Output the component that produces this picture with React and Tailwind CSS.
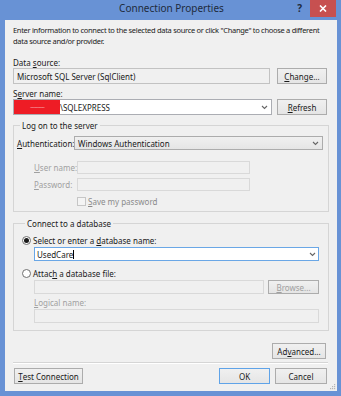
import React from 'react';

const Chevron = () => (
  <svg width="7" height="5" viewBox="0 0 7 5" className="shrink-0">
    <path d="M1 1 L3.5 3.5 L6 1" fill="none" stroke="#666" strokeWidth="1.1" />
  </svg>
);

const Btn = ({ children, className = '', disabled = false, primary = false }) => (
  <div
    className={
      'h-[16px] flex items-center justify-center border bg-gradient-to-b from-[#f0f0f0] to-[#e5e5e5] ' +
      (primary ? 'border-[#5fa3e8] ' : 'border-[#acacac] ') +
      (disabled ? 'text-[#a0a0a0] ' : 'text-[#1a1a1a] ') +
      className
    }
  >
    {children}
  </div>
);

const U = ({ children }) => <span className="underline underline-offset-[1px]">{children}</span>;

export default function App() {
  return (
    <div className="w-[341px] h-[396px] bg-[#6892d5] flex flex-col font-['Noto_Sans',sans-serif] text-[8px] leading-[11px] text-[#1a1a1a]">
      {/* title bar */}
      <div className="h-[20px] flex items-start relative shrink-0">
        <div className="flex-1 text-center text-[10px] leading-[17px] text-[#1e2b3c] pl-[2px]">Connection Properties</div>
        <div className="absolute right-[5px] top-0 flex items-start">
          <span className="text-[10px] leading-[17px] font-bold text-[#1e2b3c] mr-[8px]">?</span>
          <div className="w-[26px] h-[17px] bg-[#c75050] flex items-center justify-center">
            <svg width="8" height="7" viewBox="0 0 8 7">
              <path d="M1 0.5 L7 6.5 M7 0.5 L1 6.5" stroke="#fff" strokeWidth="1.6" />
            </svg>
          </div>
        </div>
      </div>

      {/* client area */}
      <div className="flex-1 ml-[5px] mr-[4px] mb-[5px] bg-[#f0f0f0] pl-[8px] pr-[10px] pt-[5px] flex flex-col relative">
        <p className="text-[7.5px] tracking-[-0.3px] whitespace-nowrap">
          Enter information to connect to the selected data source or click "Change" to choose a different
          <br />
          data source and/or provider.
        </p>

        <div className="mt-[10px]">Data <U>s</U>ource:</div>
        <div className="flex gap-[7px]">
          <div className="w-[257px] h-[16px] border border-[#c2c2c2] bg-[#f0f0f0] px-[3px] flex items-center">
            Microsoft SQL Server (SqlClient)
          </div>
          <Btn className="w-[50px]"><U>C</U>hange...</Btn>
        </div>

        <div className="mt-[4px]">S<U>e</U>rver name:</div>
        <div className="flex gap-[5px]">
          <div className="w-[259px] h-[16px] border border-[#abadb3] bg-white flex items-center pr-[3px]">
            <div className="w-[46px] h-full bg-[#ee1c25] flex items-center justify-center text-[#f7a8ab] text-[6px] tracking-[-1px]">
              ---------------
            </div>
            <span className="flex-1">\SQLEXPRESS</span>
            <Chevron />
          </div>
          <Btn className="w-[50px]"><U>R</U>efresh</Btn>
        </div>

        <fieldset className="mt-[5px] border border-[#d5d5d5] pl-[3px] pr-[4px] pb-[5px] w-[316px]">
          <legend className="ml-[3px] px-[2px]">Log on to the server</legend>
          <div className="mt-[5px] flex items-center h-[14px]">
            <span className="w-[57px] whitespace-nowrap"><U>A</U>uthentication:</span>
            <div className="w-[249px] h-[14px] border border-[#acacac] bg-gradient-to-b from-[#f0f0f0] to-[#e5e5e5] flex items-center px-[3px]">
              <span className="flex-1">Windows Authentication</span>
              <Chevron />
            </div>
          </div>
          <div className="mt-[11px] flex items-center h-[13px] text-[#a0a0a0]">
            <span className="w-[60px] pl-[17px] whitespace-nowrap"><U>U</U>ser name:</span>
            <div className="w-[173px] h-[13px] border border-[#d9d9d9]" />
          </div>
          <div className="mt-[4px] flex items-center h-[13px] text-[#a0a0a0]">
            <span className="w-[60px] pl-[17px] whitespace-nowrap"><U>P</U>assword:</span>
            <div className="w-[173px] h-[13px] border border-[#d9d9d9]" />
          </div>
          <div className="mt-[5px] flex items-center h-[10px] pl-[60px] text-[#8a8a8a]">
            <div className="w-[9px] h-[9px] border border-[#c6c6c6] bg-[#f4f4f4] mr-[2px]" />
            <span><U>S</U>ave my password</span>
          </div>
        </fieldset>

        <fieldset className="mt-[6px] border border-[#d5d5d5] pl-[8px] pr-[8px] pb-[7px] w-[316px]">
          <legend className="ml-[3px] px-[2px]">Connect to a database</legend>
          <div className="mt-[6px] flex items-center h-[11px]">
            <div className="w-[9px] h-[9px] rounded-full border border-[#707070] bg-white flex items-center justify-center mr-[2px]">
              <div className="w-[5px] h-[5px] rounded-full bg-[#1a1a1a]" />
            </div>
            <span>Select or enter a <U>d</U>atabase name:</span>
          </div>
          <div className="mt-[1px] ml-[12px] w-[285px] h-[14px] border border-[#6aa7e6] bg-white flex items-center px-[2px]">
            <span>UsedCare</span>
            <span className="w-px h-[9px] bg-black" />
            <span className="flex-1" />
            <Chevron />
          </div>
          <div className="mt-[7px] flex items-center h-[11px]">
            <div className="w-[9px] h-[9px] rounded-full border border-[#707070] bg-white mr-[2px]" />
            <span>Attac<U>h</U> a database file:</span>
          </div>
          <div className="mt-[1px] ml-[12px] flex gap-[4px]">
            <div className="w-[230px] h-[14px] border border-[#d9d9d9]" />
            <Btn disabled className="w-[51px] !h-[14px]"><U>B</U>rowse...</Btn>
          </div>
          <div className="mt-[3px] ml-[12px] text-[#a0a0a0]"><U>L</U>ogical name:</div>
          <div className="mt-[1px] ml-[12px] w-[285px] h-[14px] border border-[#d9d9d9]" />
        </fieldset>

        <div className="mt-[12px] flex justify-end pr-[1px]">
          <Btn className="w-[54px]">Ad<U>v</U>anced...</Btn>
        </div>
        <div className="mt-[3px] h-[2px] border-t border-[#d5d5d5] border-b border-b-white w-[315px]" />
        <div className="mt-[4px] flex items-center">
          <Btn className="w-[69px] ml-[1px]"><U>T</U>est Connection</Btn>
          <span className="flex-1" />
          <Btn primary className="w-[51px]">OK</Btn>
          <Btn className="w-[52px] ml-[5px]">Cancel</Btn>
        </div>

        <svg width="6" height="6" viewBox="0 0 6 6" className="absolute right-[1px] bottom-[1px]">
          <rect x="4" y="0" width="1.2" height="1.2" fill="#b5b5b5" />
          <rect x="2" y="2" width="1.2" height="1.2" fill="#b5b5b5" />
          <rect x="4" y="2" width="1.2" height="1.2" fill="#b5b5b5" />
          <rect x="0" y="4" width="1.2" height="1.2" fill="#b5b5b5" />
          <rect x="2" y="4" width="1.2" height="1.2" fill="#b5b5b5" />
          <rect x="4" y="4" width="1.2" height="1.2" fill="#b5b5b5" />
        </svg>
      </div>
    </div>
  );
}
